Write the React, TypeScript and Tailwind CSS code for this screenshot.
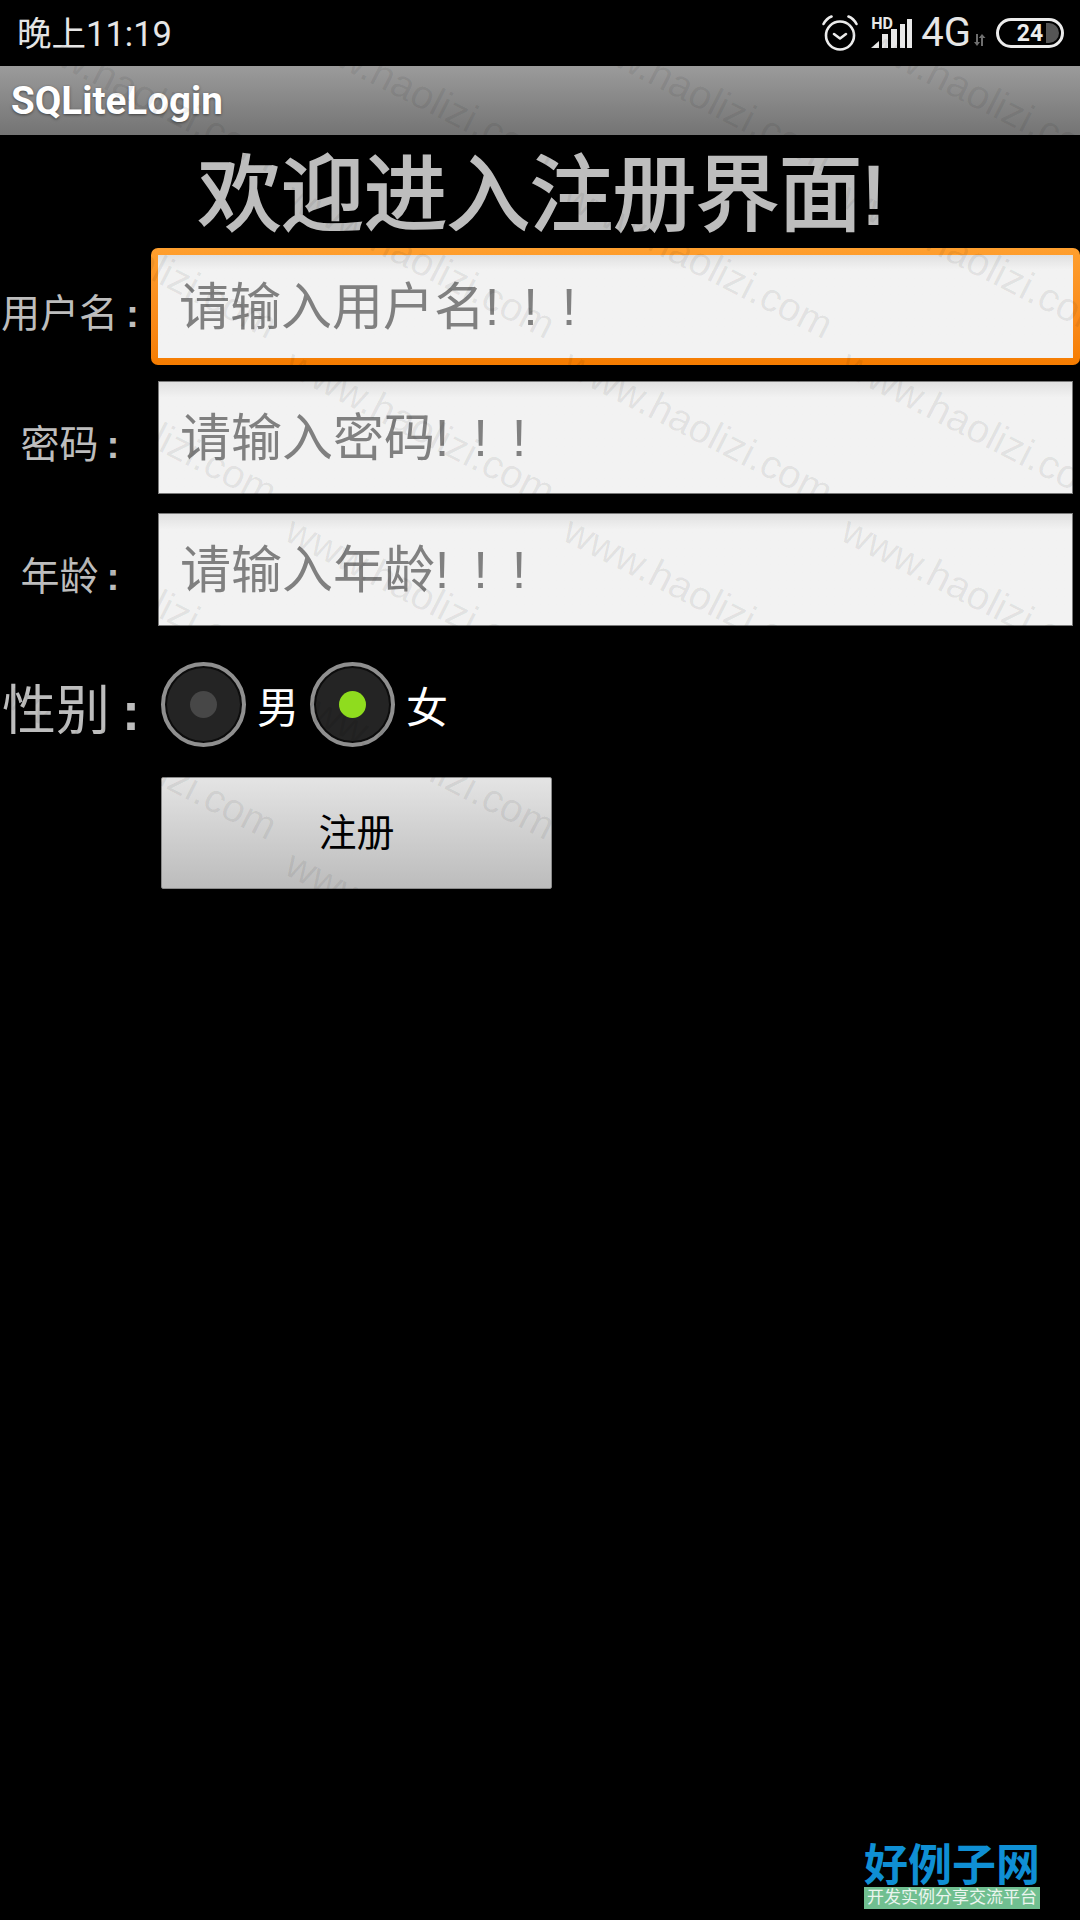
const WATERMARK_COUNT = 24;

function AlarmIcon() {
  return (
    <svg width="36" height="38" viewBox="0 0 36 38" fill="none" stroke="#ececec" strokeWidth="2.6" strokeLinecap="round" strokeLinejoin="round">
      <circle cx="18" cy="21.5" r="14" />
      <path d="M12 20l6 4.500 6-4.500" />
      <path d="M1.500 10Q4.500 4.500 9.500 2.500" />
      <path d="M34.500 10Q31.500 4.500 26.500 2.500" />
    </svg>
  );
}

function SignalIcon() {
  return (
    <svg width="41" height="30" viewBox="0 0 41 30" fill="#e8e8e8">
      <path d="M0 29l8-7v7z" />
      <rect x="11" y="15" width="6" height="14" />
      <rect x="20" y="10" width="6" height="19" />
      <rect x="29" y="5" width="5" height="24" />
      <rect x="36" y="0" width="5" height="29" />
    </svg>
  );
}

function DataArrows() {
  return (
    <svg width="13" height="12" viewBox="0 0 13 12" fill="#6e6e6e">
      <path d="M3 0h2v8h2l-3 4-3-4h2z" />
      <path d="M8 12h2V4h2.500L9 0 5.800 4H8z" />
    </svg>
  );
}

function Battery() {
  return (
    <div className="relative flex h-[30px] w-[68px] items-center justify-center overflow-hidden rounded-full border-[3px] border-[#ececec]">
      <span className="absolute bottom-[2px] right-[2px] top-[2px] w-[13px] rounded-r-full bg-[#555555]" />
      <span className="relative text-[23px] font-bold leading-none text-[#ececec] font-['Roboto',sans-serif]">24</span>
    </div>
  );
}

function Field({ label, hint, focused }: { label: string; hint: string; focused?: boolean }) {
  const input = (
    <input
      readOnly
      placeholder={hint}
      className={`h-full w-full bg-linear-to-b from-[#e0e0e0] via-[#f2f2f2] via-[14%] to-[#f2f2f2] pl-[21px] pt-[1px] text-[51px] outline-none placeholder:text-[#808080] ${focused ? "" : "border border-[#7a7a7a]"}`}
    />
  );
  return (
    <div className="flex items-center">
      <div className="w-[140px] shrink-0 pt-[14px] text-center text-[39px] leading-none text-[#bdbdbd]">
        {label}
        <span className="ml-[8px] font-bold">:</span>
      </div>
      {focused ? (
        <div className="ml-[11px] h-[117px] w-[929px] rounded-[7px] bg-linear-to-b from-[#ff9f2e] to-[#f57c00] p-[7px]">{input}</div>
      ) : (
        <div className="ml-[18px] h-[113px] w-[915px]">{input}</div>
      )}
    </div>
  );
}

function Radio({ text, checked }: { text: string; checked?: boolean }) {
  return (
    <label className="flex items-center gap-[11px]">
      <span className="flex h-[85px] w-[85px] items-center justify-center rounded-full border-[4px] border-[#8f8f8f] bg-[#242424] shadow-[inset_0_0_0_2px_#0c0c0c]">
        <span className={`h-[27px] w-[27px] rounded-full ${checked ? "bg-[#8fdc1e]" : "bg-[#474747]"}`} />
      </span>
      <span className="mt-[8px] text-[42px] leading-none text-white">{text}</span>
    </label>
  );
}

export default function App() {
  return (
    <div className="relative flex min-h-[1920px] w-[1080px] flex-col overflow-hidden bg-black font-['Liberation_Sans','Noto_Sans_CJK_SC',sans-serif]">
      <div className="flex h-[66px] items-center justify-between pl-[17px] pr-[16px]">
        <span className="mt-[4px] text-[34.500px] text-[#e6e6e6] font-['Roboto','Noto_Sans_CJK_SC',sans-serif]">晚上11:19</span>
        <div className="flex items-center">
          <AlarmIcon />
          <div className="relative ml-[13px] mt-[2px]">
            <span className="absolute -top-[3px] left-0 text-[16px] font-bold leading-none text-[#e8e8e8] font-['Roboto',sans-serif]">HD</span>
            <SignalIcon />
          </div>
          <span className="ml-[9px] text-[40px] leading-none text-[#e6e6e6] font-['Roboto',sans-serif]">4G</span>
          <div className="ml-[2px] mt-[14px]">
            <DataArrows />
          </div>
          <div className="ml-[10px]">
            <Battery />
          </div>
        </div>
      </div>

      <div className="flex h-[69px] items-center bg-linear-to-b from-[#9b9b9b] to-[#747474] pl-[11px]">
        <span className="text-[38.600px] font-bold text-white [text-shadow:0_1px_3px_rgba(0,0,0,0.5)] font-['Roboto',sans-serif]">SQLiteLogin</span>
      </div>

      <h1 className="mt-[8px] h-[105px] pl-[3px] text-center text-[83px] font-normal leading-[105px] text-[#bdbdbd] [-webkit-text-stroke:2px_#bdbdbd]">欢迎进入注册界面!</h1>

      <div className="mb-[16px]">
        <Field label="用户名" hint="请输入用户名! &#8201;! &#8201;!" focused />
      </div>
      <div className="mb-[19px]">
        <Field label="密码" hint="请输入密码! &#8201;! &#8201;!" />
      </div>
      <Field label="年龄" hint="请输入年龄! &#8201;! &#8201;!" />

      <div className="mt-[36px] flex items-center">
        <div className="w-[161px] shrink-0 pl-[2px] pt-[12px] text-[54px] leading-none text-[#bdbdbd]">
          性别<span className="ml-[12px] font-bold">:</span>
        </div>
        <Radio text="男" />
        <div className="ml-[11px]">
          <Radio text="女" checked />
        </div>
      </div>

      <button className="ml-[161px] mt-[30px] h-[112px] w-[391px] rounded-[2px] border border-[#8a8a8a] bg-linear-to-b from-[#e4e4e4] to-[#bcbcbc] text-[38px] text-black">
        注册
      </button>

      <div className="mb-[11px] mr-[40px] mt-auto flex w-[176px] flex-col self-end">
        <div className="h-[46px] text-center text-[44px] font-bold leading-[52px] text-[#0f8fd4]">好例子网</div>
        <div className="mt-[1px] h-[22px] bg-[#70bf90] text-center text-[17px] leading-[22px] text-[#eaf5ee] whitespace-nowrap">开发实例分享交流平台</div>
      </div>

      {/* site watermark, only shows where the page is not black */}
      <div className="pointer-events-none absolute left-[20px] top-[8px] grid grid-cols-[repeat(4,278px)] auto-rows-[167px] font-['Liberation_Sans',sans-serif]">
        {Array.from({ length: WATERMARK_COUNT }, (_, i) => (
          <span key={i} className="w-0 origin-top-left rotate-[27deg] whitespace-nowrap text-[40px] leading-none text-black/[0.07]">
            www.haolizi.com
          </span>
        ))}
      </div>
    </div>
  );
}
